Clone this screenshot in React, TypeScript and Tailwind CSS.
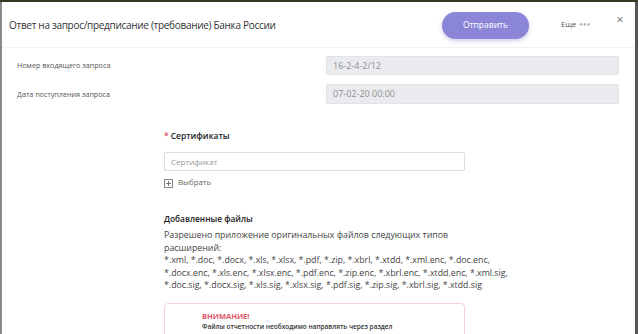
import React from "react";

export default function App() {
  return (
    <div className="w-[638px] h-[334px] overflow-hidden bg-[#4a4a4a] flex flex-col" style={{ fontFamily: '"Open Sans", sans-serif' }}>
      <div className="h-[2px] bg-[#3b3623] shrink-0" />
      <div className="flex flex-1 min-h-0">
        <div className="w-[2px] bg-[#8a8a8a] shrink-0" />
        <div className="w-[633px] bg-white flex flex-col min-h-0 overflow-hidden">
          {/* header */}
          <div className="h-[46px] shrink-0 flex items-center border-b border-[#f2f2f2] pl-[7px]">
            <div className="text-[10px] tracking-[-0.3px] text-[#333] w-[433px] leading-[14px]">Ответ на запрос/предписание (требование) Банка России</div>
            <button className="w-[87px] h-[27px] rounded-full bg-[#8b85d8] text-white text-[8.5px] shadow-[0_2px_4px_rgba(120,110,200,0.35)] mt-[1px]">Отправить</button>
            <div className="ml-[32px] text-[7.5px] text-[#555] flex items-center gap-[3px] leading-none">
              <span>Еще</span>
              <span className="text-[#aaa] tracking-[0.5px] text-[5.5px]">●●●</span>
            </div>
            <div className="ml-[26px] text-[12px] text-[#666] leading-none -mt-[10px]">×</div>
          </div>
          {/* rows */}
          <div className="flex flex-col pt-[8px]">
            <div className="flex items-center h-[19px]">
              <div className="w-[324px] pl-[15px] text-[7.2px] text-[#555]">Номер входящего запроса</div>
              <div className="w-[293px] h-[19px] rounded-[2px] bg-[#e9ebee] border border-[#e0e2e5] text-[9px] text-[#8f8f8f] pl-[6px] flex items-center">16-2-4-2/12</div>
            </div>
            <div className="flex items-center h-[20px] mt-[9px]">
              <div className="w-[324px] pl-[15px] text-[7.2px] text-[#555]">Дата поступления запроса</div>
              <div className="w-[293px] h-[20px] rounded-[2px] bg-[#e9ebee] border border-[#e0e2e5] text-[9px] text-[#8f8f8f] pl-[6px] flex items-center">07-02-20 00:00</div>
            </div>
          </div>
          {/* centre column */}
          <div className="ml-[162px] w-[301px] flex flex-col">
            <div className="mt-[26px] h-[12px] text-[8.5px] leading-[12px] font-semibold text-[#222] flex items-center">
              <span className="text-[#e0475a] mr-[2px]">*</span>Сертификаты
            </div>
            <div className="mt-[10px] h-[19px] border border-[#ddd] rounded-[2px] text-[8px] text-[#999] pl-[6px] flex items-center">Сертификат</div>
            <div className="mt-[7px] h-[10px] flex items-center gap-[5px] text-[7.8px] text-[#666]">
              <svg width="9" height="9" viewBox="0 0 9 9" className="shrink-0">
                <rect x="0.5" y="0.5" width="8" height="8" fill="none" stroke="#888" strokeWidth="1" />
                <path d="M4.5 2v5M2 4.5h5" stroke="#666" strokeWidth="0.9" />
              </svg>
              <span>Выбрать</span>
            </div>
            <div className="mt-[25px] text-[8.3px] leading-[12px] font-semibold text-[#222]">Добавленные файлы</div>
            <div className="mt-[4px] text-[8.8px] leading-[12.6px] text-[#444] whitespace-nowrap">
              <div>Разрешено приложение оригинальных файлов следующих типов</div>
              <div>расширений:</div>
              <div>*.xml, *.doc, *.docx, *.xls, *.xlsx, *.pdf, *.zip, *.xbrl, *.xtdd, *.xml.enc, *.doc.enc,</div>
              <div>*.docx.enc, *.xls.enc, *.xlsx.enc, *.pdf.enc, *.zip.enc, *.xbrl.enc, *.xtdd.enc, *.xml.sig,</div>
              <div>*.doc.sig, *.docx.sig, *.xls.sig, *.xlsx.sig, *.pdf.sig, *.zip.sig, *.xbrl.sig, *.xtdd.sig</div>
            </div>
            <div className="mt-[11px] h-[60px] shrink-0 border border-[#f3d4d8] rounded-[4px] pl-[37px] pt-[7px]">
              <div className="text-[7.5px] leading-[10px] font-bold text-[#e05565]">ВНИМАНИЕ!</div>
              <div className="text-[6.5px] leading-[9px] font-semibold text-[#333] mt-[1px]">Файлы отчетности необходимо направлять через раздел</div>
            </div>
          </div>
        </div>
        <div className="flex-1 bg-[#555]" />
      </div>
    </div>
  );
}
